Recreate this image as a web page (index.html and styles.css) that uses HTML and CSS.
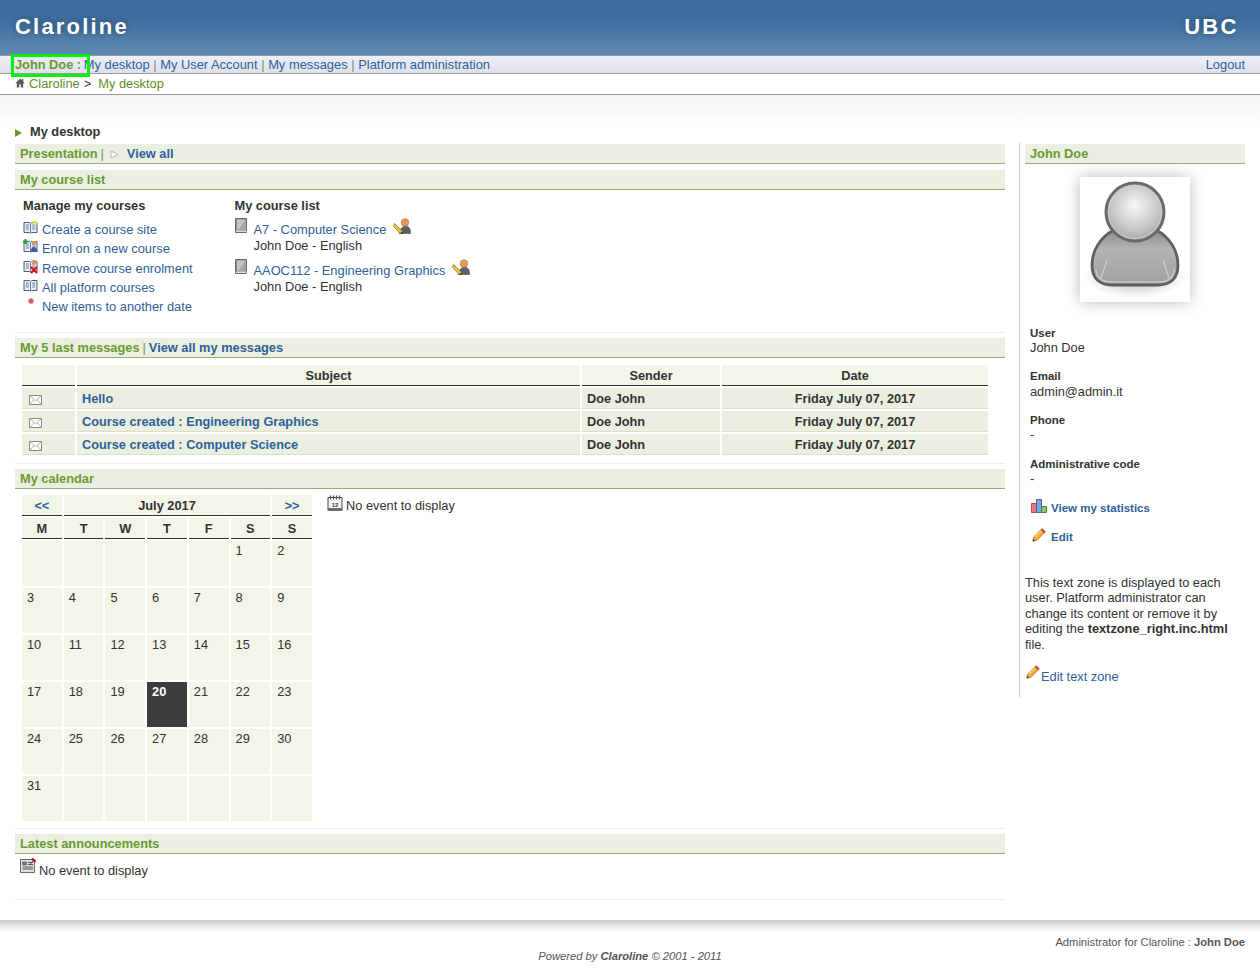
FILE: index.html
```html
<!DOCTYPE html>
<html lang="en">
<head>
<meta charset="utf-8">
<title>Claroline - My desktop</title>
<link rel="stylesheet" href="styles.css">
</head>
<body>
<svg class="defs" width="0" height="0" aria-hidden="true">
  <defs>
    <g id="book">
      <path d="M1 2.500h5.500l1 1 1-1H14v10H8.500l-1 .8-1-.8H1z" fill="#e8edf5" stroke="#47607f"/>
      <path d="M7.500 3.500v9M2.800 5h3M2.800 7h3M2.800 9h3M9.200 5h3M9.200 7h3M9.200 9h3" stroke="#5d7695" stroke-width=".9" fill="none"/>
    </g>
    <g id="pencil">
      <path d="M.8 15.200l1.200-5L10.200 2l3.800 3.800-8.200 8.200z" fill="#f2aa3a" stroke="#a8671d" stroke-width=".7"/>
      <path d="M3.500 10.500l7.800-7.800" stroke="#fbdc8c" stroke-width="1.200"/>
      <path d="M10.200 2l1.500-1.500 3.800 3.800L14 5.800z" fill="#e2502c" stroke="#a8361d" stroke-width=".5"/>
      <path d="M.8 15.200l.7-3 2.300 2.300z" fill="#4a3a28"/>
    </g>
    <g id="coursebook">
      <path d="M.5.500h11v14H.500z" fill="#8e8e8e" stroke="#6a6a6a"/>
      <path d="M2 1.500h8.500v10H2z" fill="#c4c4c4"/>
      <path d="M10 2l-6 9.500h6z" fill="#a6a6a6"/>
      <path d="M1 12.500h10.500v1.500H1z" fill="#dcdcdc"/>
    </g>
    <g id="manager">
      <path d="M6 15.500h11.500c.2-4.500-1-7-5-7.500-3.500.5-5.700 3-6.500 7.500z" fill="#5a6066" stroke="#444" stroke-width=".5"/>
      <circle cx="12" cy="4.500" r="3.800" fill="#e09a5b" stroke="#b27136" stroke-width=".6"/>
      <path d="M1.500 5.500l8 8-2.500 2L.3 7.800z" fill="#f2c43c" stroke="#a8761d" stroke-width=".8"/>
      <path d="M7 15.500l2.500-2 .5 2.300z" fill="#3f3325"/>
    </g>
    <g id="mail">
      <path d="M.5 1.500h12v9H.500z" fill="#fff" stroke="#8d8d8d"/>
      <path d="M.8 1.800l5.700 5 5.700-5M.8 10.200l4.200-4.500M12.200 10.200l-4.200-4.500" fill="none" stroke="#9a9a9a" stroke-width=".8"/>
    </g>
  </defs>
</svg>

<header class="banner">
  <span class="brand">Claroline</span>
  <span class="brand brand-right">UBC</span>
</header>

<nav class="topnav">
  <div class="topnav-links">
    <span class="username">John Doe :</span>
    <a href="#">My desktop</a><span class="sep">|</span><a href="#">My User Account</a><span class="sep">|</span><a href="#">My messages</a><span class="sep">|</span><a href="#">Platform administration</a>
  </div>
  <a href="#">Logout</a>
  <div class="highlight"></div>
</nav>

<div class="crumbs">
  <svg class="home" width="10" height="10" viewBox="0 0 10 10"><path d="M5 .8L.3 5.200h1.500V9.500h2.400V6.500h1.600v3h2.400V5.200h1.500L8.200 3.200V1H7v1.100z" fill="#5f5750"/></svg>
  <a href="#">Claroline</a><span class="crumb-sep">&gt;</span><a href="#">My desktop</a>
</div>
<div class="fade"></div>

<div class="page">
  <main class="main">
    <h1 class="page-title"><span class="arrow"></span>My desktop</h1>

    <div class="sec-head"><span class="g">Presentation</span><span class="g bar">|</span>
      <svg class="hollow" width="9" height="9" viewBox="0 0 9 9"><path d="M1 1l7 3.500-7 3.500z" fill="#fff" stroke="#b5b5b5"/></svg>
      <a href="#">View all</a></div>

    <div class="sec-head sec-gap"><span class="g">My course list</span></div>
    <section class="courses">
      <div class="manage">
        <h2 class="col-title">Manage my courses</h2>
        <ul class="manage-list">
          <li class="l1"><svg width="15" height="15" viewBox="0 0 15 15"><use href="#book"/><circle cx="12" cy="2.500" r="2.300" fill="#e8e35c"/></svg><a href="#">Create a course site</a></li>
          <li class="l2"><svg width="15" height="15" viewBox="0 0 15 15"><use href="#book"/><circle cx="11" cy="4" r="2.300" fill="#e2964f"/><path d="M7.500 13c0-3 1.500-5 3.500-5s3.500 2 3.500 5z" fill="#3f5f9c"/><path d="M2.500 0v5M0 2.500h5" stroke="#1c9a2c" stroke-width="1.800"/></svg><a href="#">Enrol on a new course</a></li>
          <li class="l3"><svg width="15" height="15" viewBox="0 0 15 15"><use href="#book"/><circle cx="11" cy="3" r="2.300" fill="#e2964f"/><path d="M8 8l6 6M14 8l-6 6" stroke="#d8141a" stroke-width="2.200"/></svg><a href="#">Remove course enrolment</a></li>
          <li class="l4"><svg width="15" height="15" viewBox="0 0 15 15"><use href="#book"/></svg><a href="#">All platform courses</a></li>
          <li class="l5"><svg width="15" height="15" viewBox="0 0 15 15"><circle cx="8" cy="4" r="2.600" fill="#ee4d5a" stroke="#b9b9b9"/></svg><a href="#">New items to another date</a></li>
        </ul>
      </div>
      <div class="mycourses">
        <h2 class="col-title">My course list</h2>
        <div class="course">
          <svg class="course-ico" width="12" height="15" viewBox="0 0 12 15"><use href="#coursebook"/></svg>
          <div class="course-body">
            <div class="course-line"><a href="#">A7 - Computer Science</a><svg class="mgr" width="18" height="17" viewBox="0 0 18 17"><use href="#manager"/></svg></div>
            <div>John Doe - English</div>
          </div>
        </div>
        <div class="course">
          <svg class="course-ico" width="12" height="15" viewBox="0 0 12 15"><use href="#coursebook"/></svg>
          <div class="course-body">
            <div class="course-line"><a href="#">AAOC112 - Engineering Graphics</a><svg class="mgr" width="18" height="17" viewBox="0 0 18 17"><use href="#manager"/></svg></div>
            <div>John Doe - English</div>
          </div>
        </div>
      </div>
    </section>

    <hr class="rule r-msg">
    <div class="sec-head"><span class="g">My 5 last messages</span><span class="g bar2">|</span><a href="#">View all my messages</a></div>
    <table class="msgs">
      <colgroup><col class="c-ico"><col class="c-sub"><col class="c-snd"><col class="c-date"></colgroup>
      <thead><tr><th></th><th>Subject</th><th>Sender</th><th>Date</th></tr></thead>
      <tbody>
        <tr><td class="mail-cell"><svg width="13" height="12" viewBox="0 0 13 12"><use href="#mail"/></svg></td><td><a href="#">Hello</a></td><td>Doe John</td><td class="ctr">Friday July 07, 2017</td></tr>
        <tr><td class="mail-cell"><svg width="13" height="12" viewBox="0 0 13 12"><use href="#mail"/></svg></td><td><a href="#">Course created : Engineering Graphics</a></td><td>Doe John</td><td class="ctr">Friday July 07, 2017</td></tr>
        <tr><td class="mail-cell"><svg width="13" height="12" viewBox="0 0 13 12"><use href="#mail"/></svg></td><td><a href="#">Course created : Computer Science</a></td><td>Doe John</td><td class="ctr">Friday July 07, 2017</td></tr>
      </tbody>
    </table>

    <hr class="rule r-cal">
    <div class="sec-head"><span class="g">My calendar</span></div>
    <section class="cal-row">
      <table class="cal">
        <thead>
          <tr class="cal-nav"><th><a href="#">&lt;&lt;</a></th><th colspan="5">July 2017</th><th><a href="#">&gt;&gt;</a></th></tr>
          <tr class="cal-days"><th>M</th><th>T</th><th>W</th><th>T</th><th>F</th><th>S</th><th>S</th></tr>
        </thead>
        <tbody>
          <tr><td></td><td></td><td></td><td></td><td></td><td>1</td><td>2</td></tr>
          <tr><td>3</td><td>4</td><td>5</td><td>6</td><td>7</td><td>8</td><td>9</td></tr>
          <tr><td>10</td><td>11</td><td>12</td><td>13</td><td>14</td><td>15</td><td>16</td></tr>
          <tr><td>17</td><td>18</td><td>19</td><td class="today">20</td><td>21</td><td>22</td><td>23</td></tr>
          <tr><td>24</td><td>25</td><td>26</td><td>27</td><td>28</td><td>29</td><td>30</td></tr>
          <tr><td>31</td><td></td><td></td><td></td><td></td><td></td><td></td></tr>
        </tbody>
      </table>
      <div class="no-event">
        <svg width="16" height="17" viewBox="0 0 16 17"><path d="M1 2.500h14v13H1z" fill="#f6f6f6" stroke="#444"/><path d="M1 13h14v3H1z" fill="#6a6a6a"/><path d="M3.500.5v4M6.500.5v4M9.500.5v4M12.500.5v4" stroke="#555" stroke-width="1.200"/><text x="8" y="11.500" class="cal-num" text-anchor="middle">12</text></svg>
        <span>No event to display</span>
      </div>
    </section>

    <hr class="rule r-ann">
    <div class="sec-head"><span class="g">Latest announcements</span></div>
    <div class="ann">
      <svg width="17" height="17" viewBox="0 0 17 17"><path d="M.5 2.500h14v13H.500z" fill="#e0e0e0" stroke="#6a6a6a"/><path d="M2.500 5h4v3h-4z" fill="#777" stroke="#555" stroke-width=".6"/><path d="M8 5.500h5M8 7.500h5M2.500 10h10.500M2.500 12h10.500" stroke="#555"/><path d="M10.500 7l3-3" stroke="#555"/><path d="M12 1.500l3.500 3.500" stroke="#b01622" stroke-width="2.400"/></svg>
      <span>No event to display</span>
    </div>
    <hr class="rule">
  </main>

  <aside class="side">
    <div class="sec-head"><span class="g">John Doe</span></div>
    <div class="avatar">
      <svg width="110" height="125" viewBox="0 0 110 125">
        <defs>
          <radialGradient id="head" cx=".5" cy=".4" r=".6"><stop offset="0" stop-color="#f8f8f8"/><stop offset=".7" stop-color="#c4c4c4"/><stop offset="1" stop-color="#a8a8a8"/></radialGradient>
          <linearGradient id="body" x1="0" y1="0" x2="0" y2="1"><stop offset="0" stop-color="#8a8a8a"/><stop offset=".35" stop-color="#b4b4b4"/><stop offset="1" stop-color="#a0a0a0"/></linearGradient>
          <radialGradient id="shadow"><stop offset="0" stop-color="#888" stop-opacity=".7"/><stop offset="1" stop-color="#999" stop-opacity="0"/></radialGradient>
        </defs>
        <ellipse cx="55" cy="100" rx="51" ry="21" fill="url(#shadow)"/>
        <path d="M34 53C20 60 12 74 12 88c0 14 8 20 20 20h46c12 0 20-6 20-20 0-14-8-28-22-35z" fill="url(#body)" stroke="#5f5f5f" stroke-width="2.800"/>
        <path d="M21 101l6-18M89 101l-6-18M16 92c0 8 5 13 16 13h46c11 0 16-5 16-13" fill="none" stroke="#c9c9c9" stroke-width="1.500"/>
        <circle cx="55" cy="35" r="29" fill="url(#head)" stroke="#6a6a6a" stroke-width="3"/>
        <circle cx="55" cy="35" r="26.500" fill="none" stroke="#cfcfcf" stroke-width="1"/>
      </svg>
    </div>
    <dl class="info">
      <dt>User</dt><dd class="d1">John Doe</dd>
      <dt>Email</dt><dd class="d2">admin@admin.it</dd>
      <dt>Phone</dt><dd class="d3">-</dd>
      <dt>Administrative code</dt><dd class="d4">-</dd>
    </dl>
    <div class="cmd cmd1">
      <svg width="16" height="14" viewBox="0 0 16 14"><path d="M.5 4.500h5v9h-5z" fill="#ea7a7a" stroke="#c44"/><path d="M5.500.5h5v13h-5z" fill="#7fa5da" stroke="#3a64a5"/><path d="M10.500 7.500h5v6h-5z" fill="#8cc47c" stroke="#48803a"/></svg>
      <a href="#">View my statistics</a>
    </div>
    <div class="cmd cmd2">
      <svg width="14" height="14" viewBox="0 0 16 16"><use href="#pencil"/></svg>
      <a href="#">Edit</a>
    </div>
    <p class="zone">This text zone is displayed to each user. Platform administrator can change its content or remove it by editing the <b>textzone_right.inc.html</b> file.</p>
    <div class="edit-zone">
      <svg width="14" height="14" viewBox="0 0 16 16"><use href="#pencil"/></svg><a href="#">Edit text zone</a>
    </div>
  </aside>
</div>

<footer class="footer">
  <div class="footer-admin">Administrator for Claroline : <b>John Doe</b></div>
  <div class="footer-power">Powered by <b>Claroline</b> © 2001 - 2011</div>
</footer>
</body>
</html>
```
FILE: styles.css
```css
* { box-sizing: border-box; }
html, body { margin: 0; padding: 0; }
body {
  font-family: "Liberation Sans", Arial, sans-serif;
  font-size: 12.85px;
  line-height: 15px;
  color: #333;
  background: #fff;
  height: 978px;
  overflow: hidden;
}
a { color: #2f5f98; text-decoration: none; }
.defs { position: absolute; }

.banner {
  height: 56px;
  display: flex;
  justify-content: space-between;
  padding: 15px 15px 0;
  background: linear-gradient(#3b6c9e 0, #3e6e9f 20px, #6189b2 100%);
  border-bottom: 1px solid #8c9aa8;
}
.brand {
  font-size: 22px;
  font-weight: bold;
  line-height: 24px;
  letter-spacing: 2.200px;
  color: #fff;
  text-shadow: 0 0 6px rgba(0, 0, 0, .35);
}
.brand-right { margin-right: 6.500px; }

.topnav {
  position: relative;
  height: 18px;
  padding: 1px 15px 0;
  display: flex;
  justify-content: space-between;
  background: linear-gradient(#eef0f6, #dde1ec);
  border-bottom: 1px solid #9a9a9a;
}
.topnav-links a { font-size: 12.900px; }
.username { color: #6b9a2d; font-weight: bold; font-size: 12.800px; margin-right: -1px; }
.sep { color: #7d8a70; margin: 0 3.600px; }
.highlight {
  position: absolute;
  left: 11px;
  top: -2px;
  width: 79px;
  height: 23px;
  border: 3px solid #0cf00c;
}

.crumbs {
  height: 21px;
  padding: 2px 15px 0;
  border-bottom: 1px solid #999;
  display: flex;
  align-items: flex-start;
}
.crumbs a { color: #5f8f26; }
.home { margin: 2px 4px 0 0; }
.crumb-sep { margin: 0 7px 0 4px; }
.fade { height: 29px; background: linear-gradient(#f5f5f5, #fff); }

.page { display: flex; align-items: flex-start; padding: 0 15px; height: 796px; }
.main { width: 990px; flex: none; }
.side {
  margin-left: 14px;
  width: 226px;
  flex: none;
  height: 554px;
  margin-top: 19px;
  border-left: 1px solid #ccc;
  padding: 1px 0 0 5px;
}

.page-title {
  margin: 0;
  height: 20px;
  font-size: 12.8px;
  line-height: 15px;
  display: flex;
  align-items: flex-start;
}
.arrow {
  width: 0; height: 0;
  margin: 5px 8px 0 0;
  border-left: 7px solid #69992f;
  border-top: 4px solid transparent;
  border-bottom: 4px solid transparent;
}

.sec-head {
  height: 20px;
  padding: 2px 5px 0;
  background: #ebefe1;
  border-bottom: 1px solid #8fb070;
  font-size: 12.8px;
  font-weight: bold;
  display: flex;
  align-items: flex-start;
}
.sec-gap { margin-top: 6px; }
.g { color: #6a9a32; }
.bar { margin-left: 3px; font-weight: normal; }
.bar2 { margin: 0 3px; font-weight: normal; }
.hollow { margin: 4px 8px 0 6px; }

.courses { display: flex; height: 142px; padding: 8px 0 0 8px; }
.manage { width: 211.500px; }
.col-title { margin: 0; font-size: 12.8px; line-height: 15px; color: #333; }
.manage-list { list-style: none; margin: 9px 0 0; padding: 0; }
.manage-list li { height: 19px; display: flex; align-items: flex-start; }
.manage-list .l3 { margin-top: 1px; }
.manage-list svg { flex: none; margin: -2px 4px 0 0; }
.course { display: flex; margin-top: 7px; }
.course + .course { margin-top: 7px; }
.course-ico { flex: none; margin: -2px 7px 0 0; }
.course-body { line-height: 16px; padding-top: 2px; }
.course-line { display: flex; align-items: flex-start; }
.mgr { margin: -4px 0 0 7px; }

.rule { border: 0; height: 1px; margin: 0; background: #eee; }
.r-msg { margin-bottom: 5px; }
.r-cal { margin: 6px 0 5px; }
.r-ann { margin: 7px 0 5px; }

.msgs {
  margin: 5px 0 0 5px;
  border-collapse: separate;
  border-spacing: 2px;
  table-layout: fixed;
  width: 970px;
  font-size: 12.750px;
}
.c-ico { width: 53px; }
.c-sub { width: 503px; }
.c-snd { width: 138px; }
.c-date { width: 266px; }
.msgs th {
  height: 21px;
  background: #f2f5e8;
  border-bottom: 1px solid #333;
  padding: 0;
  text-align: center;
  color: #333;
}
.msgs td {
  height: 21px;
  background: #ebefe1;
  border-bottom: 1px solid #dde2c6;
  padding: 0 5px;
  font-weight: bold;
  vertical-align: middle;
}
.msgs td.ctr { text-align: center; }
.msgs .mail-cell { padding: 3px 0 0 7px; }
.msgs svg { display: block; }

.cal-row { display: flex; align-items: flex-start; padding: 4px 0 0 5px; height: 332px; }
.cal {
  border-collapse: separate;
  border-spacing: 2px;
  table-layout: fixed;
  width: 294px;
  font-size: 12.800px;
}
.cal th {
  height: 21px;
  padding: 0;
  background: #f2f5e8;
  border-bottom: 1px solid #333;
  text-align: center;
  color: #333;
}
.cal td {
  height: 45px;
  padding: 2px 0 0 5px;
  background: #f2f5e8;
  vertical-align: top;
  color: #333;
}
.cal td.today { background: #3c3c3c; color: #fff; font-weight: bold; }
.no-event { margin: 5px 0 0 13px; display: flex; align-items: flex-start; gap: 3px; font-size: 12.800px; }
.no-event svg { margin-top: -3px; flex: none; }
.cal-num { font-size: 6px; font-weight: bold; fill: #333; }

.ann { height: 45px; padding: 3px 0 0 5px; display: flex; align-items: flex-start; gap: 2px; font-size: 12.800px; }
.ann span { margin-top: 6px; }

.avatar { height: 161px; display: flex; justify-content: center; padding-top: 13px; }
.avatar svg { background: #fff; box-shadow: 0 0 14px rgba(0, 0, 0, .28); }

.info { margin: 1px 0 0 5px; font-size: 12.800px; }
.info dt { font-weight: bold; font-size: 11.500px; line-height: 14px; }
.info dd { margin: 0; line-height: 15px; }
.d1 { margin-bottom: 14px !important; }
.d2 { margin: 1px 0 14px !important; }
.d3 { margin-bottom: 15px !important; }
.d4 { margin-bottom: 15px !important; }

.cmd { margin-left: 6px; display: flex; align-items: flex-start; gap: 4px; font-size: 11.500px; font-weight: bold; }
.cmd1 { height: 29px; }
.cmd2 { height: 29px; padding-left: 1px; gap: 5px; }
.cmd svg { flex: none; margin-top: -2px; }

.zone { margin: 15.500px 0 0; width: 210px; line-height: 15.500px; font-size: 12.800px; }
.edit-zone { margin-top: 16.500px; display: flex; align-items: flex-start; font-size: 12.800px; }
.edit-zone svg { flex: none; margin: -4px 1px 0 1px; }

.footer {
  height: 58px;
  padding: 15px 15px 0;
  background: linear-gradient(#cbcbcb, #fff 12px);
  font-size: 11.200px;
  line-height: 14px;
  color: #555;
}
.footer-admin { text-align: right; }
.footer-power { font-style: italic; text-align: center; }
```
